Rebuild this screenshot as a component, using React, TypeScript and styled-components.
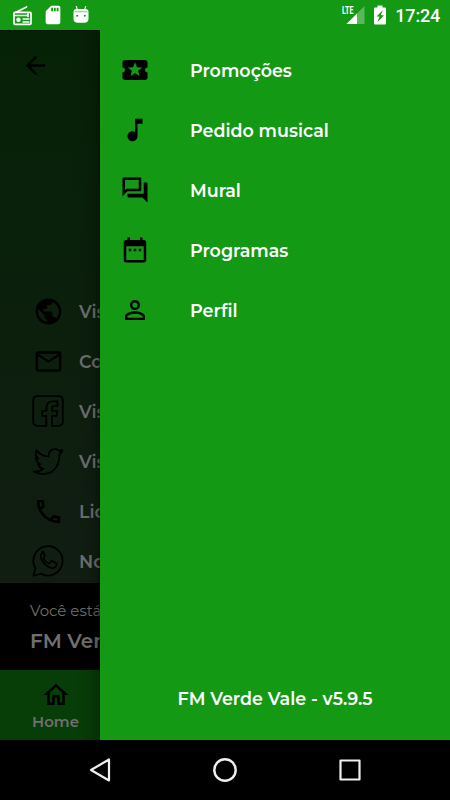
import React from 'react';
import styled, { createGlobalStyle } from 'styled-components';
import {
  MdArrowBack, MdDateRange, MdLocalPlay, MdMailOutline, MdMusicNote, MdOutlineHome,
  MdOutlineLocalPhone, MdOutlineQuestionAnswer, MdPersonOutline, MdPublic, MdSdCard,
} from 'react-icons/md';

const Global = createGlobalStyle`
  * { box-sizing: border-box; }
  body { margin: 0; background: #000; font-family: Montserrat, Inter, sans-serif; }
  svg { display: block; flex: none; }
`;
const Screen = styled.div`
  width: 450px; height: 800px; display: flex; flex-direction: column;
  overflow: hidden; background: #000;
`;
const StatusBar = styled.header`
  height: 30px; flex: none; display: flex; align-items: center; justify-content: space-between;
  padding: 0 10px 0 12px; background: #139913; color: #fff;
`;
const StatusGroup = styled.div<{ $gap: number }>`
  display: flex; align-items: center; gap: ${p => p.$gap}px;
`;
const Clock = styled.span`
  font: 500 18px/30px Roboto, sans-serif; letter-spacing: -0.2px; padding-top: 2px;
`;
const Body = styled.div`height: 710px; flex: none; display: flex;`;
const Page = styled.div`
  position: relative; width: 100px; flex: none; display: flex; flex-direction: column;
  overflow: hidden; white-space: nowrap; color: #707070;
  &::after {
    content: ''; position: absolute; top: 0; right: 0; bottom: 0; width: 26px;
    background: linear-gradient(to right, transparent, rgba(0,0,0,.08) 60%, rgba(0,0,0,.22) 94%, rgba(0,0,0,.65));
  }
`;
const Content = styled.div`
  height: 553px; flex: none; display: flex; flex-direction: column;
  background: linear-gradient(#052206, #111d12); border-top: 1px solid #001000; color: #000;
`;
const BackRow = styled.div`height: 255px; flex: none; padding: 20px 0 0 21px;`;
const LinkRow = styled.div`
  height: 50px; flex: none; display: flex; align-items: center; padding-left: 32px; gap: 15px;
`;
const IconBox = styled.span`
  width: 32px; height: 32px; flex: none; display: flex; align-items: center; justify-content: center;
`;
const Label = styled.span`
  font-size: 17.5px; line-height: 24px; font-weight: 600; white-space: nowrap;
`;
const LinkLabel = styled(Label)`color: #6f706f; padding-top: 2px;`;
const Player = styled.div`
  height: 87px; flex: none; padding: 16px 0 0 30px; background: #000;
`;
const Subtitle = styled.div`font-size: 15px; line-height: 24px; font-weight: 400;`;
const Station = styled.div`font-size: 20px; line-height: 30px; padding-top: 3px; font-weight: 600;`;
const HomeTab = styled.div`
  flex: 1; width: 111px; display: flex; flex-direction: column; align-items: center;
  padding-top: 10px; background: #073d07;
  svg { color: #000; }
`;
const HomeLabel = styled.span`font-size: 15px; line-height: 20px; font-weight: 600; padding-top: 2px;`;
const Drawer = styled.aside`
  width: 350px; flex: none; display: flex; flex-direction: column; justify-content: space-between;
  background: #139913; color: #fff; padding: 10px 0 29px;
`;
const Menu = styled.nav`display: flex; flex-direction: column;`;
const MenuItem = styled.div`
  height: 60px; display: flex; align-items: center; gap: 40px; padding-left: 20px;
  svg { color: #000; }
`;
const MenuLabel = styled(Label)`padding-top: 2px;`;
const Version = styled(Label)`text-align: center;`;
const NavBar = styled.footer`
  height: 60px; flex: none; display: flex; align-items: center; justify-content: space-between;
  padding: 0 85px; background: #000;
`;

const line = { fill: 'none', stroke: 'currentColor', strokeLinejoin: 'round', strokeLinecap: 'round' } as const;

const Radio = () => (
  <svg width="21" height="21" viewBox="0 0 21 21" {...line} strokeWidth="1.700">
    <path d="M4 7.200 14.500 2" /><rect x="2" y="7.300" width="17" height="12" rx="1" />
    <path d="M3 10.500h12M11 14h6M11 17h6" strokeWidth="1.300" />
    <circle cx="6.500" cy="14.700" r="2.200" fill="currentColor" stroke="none" />
    <path d="M16 8.500v3" />
  </svg>
);
const Robot = () => (
  <svg width="16" height="18" viewBox="0 0 16 18">
    <path d="M3.200 0 4.500 4M12.800 0 11.500 4" stroke="#fff" strokeWidth="1.100" />
    <path d="M.5 6Q.5 3 3.500 3h9q3 0 3 3v6.500q0 4.300-4.500 4.300H5Q.5 16.800.5 12.500Z" fill="#fff" />
    <path d="M1.500 5.700h13" stroke="#9bd49b" strokeWidth="1.300" />
    <circle cx="4.200" cy="9.700" r="1" fill="#139913" /><circle cx="11.800" cy="9.700" r="1" fill="#139913" />
  </svg>
);
const Signal = () => (
  <svg width="23" height="20" viewBox="0 0 23 20">
    <path d="M22.500 1v18H4.500Z" fill="#fff" opacity=".3" />
    <path d="M15 8.500V19H4.500Z" fill="#fff" />
    <text x="0" y="9.200" fill="#fff" fontFamily="Roboto" fontWeight="700" fontSize="10.500" textLength="11.500" lengthAdjust="spacingAndGlyphs">LTE</text>
  </svg>
);
const Battery = () => (
  <svg width="12" height="20" viewBox="0 0 12 20">
    <path d="M3.500 0.500h5v2h2.300q1.200 0 1.200 1.200v14.600q0 1.200-1.200 1.200H1.200Q0 19.500 0 18.300V3.700Q0 2.500 1.200 2.500h2.300Z" fill="#fff" />
    <path d="M9 5 2.500 11.500h3L3.500 17.300l6.500-7H6.700Z" fill="#139913" />
  </svg>
);
const Facebook = () => (
  <svg width="32" height="32" viewBox="0 0 32 32" {...line} strokeWidth="1.700">
    <path d="M14.300 30.800H5.500Q1.200 30.800 1.200 26.500v-21Q1.200 1.200 5.500 1.200h21Q30.800 1.200 30.800 5.500v21Q30.800 30.800 26.500 30.800H20v-10h4.500l.8-4.800H20v-3q0-2 2-2h3.500V6.300H21q-6.500 0-6.500 6.200V16H10.200v4.800h4.100Z" />
  </svg>
);
const Twitter = () => (
  <svg width="32" height="32" viewBox="0 0 32 32" {...line} strokeWidth="1.700">
    <path d="M30.500 6.200q-1.500.8-2.400.8 1.200-.9 1.700-2.200l-2.700 1q-2.200-2.100-5.200-1.600-5.600 1-5.200 7.300-7.800-.4-12.200-6.300-2.300 4.900 1.700 8.400-1.300 0-2.500-.8.300 4.500 4.700 6.400l-2.300.2q1.300 3.700 5.200 4.400-3.500 3.100-9.700 2.700 4.500 2.600 9.700 2.600 9.500-.4 13.600-8.200Q27.600 16 27.400 9.500q2-1.500 3.100-3.300Z" />
  </svg>
);
const WhatsApp = () => (
  <svg width="32" height="32" viewBox="0 0 32 32" {...line} strokeWidth="1.700">
    <path d="M1.500 30.700 3.400 23.300A14.600 14.600 0 1 1 9 28.700Z" />
    <path d="M11.200 7.200 9.800 8.100q-1.700 2.100-.9 5 2.800 7.200 9.800 9.600 4 1.300 5.800-2l.3-2.300-4.400-2.500q-.8-.3-1.300.5l-1.500 1.800q-.5.500-1.200.1-3.500-1.600-5-5l.2-.9 1.300-1.700-.1-.8-1.600-3q0-.3-.8-.3Z" />
  </svg>
);

const links = [
  { id: 'site', icon: <MdPublic size={31} />, text: 'Vis' },
  { id: 'mail', icon: <MdMailOutline size={31} />, text: 'Co' },
  { id: 'facebook', icon: <Facebook />, text: 'Vis' },
  { id: 'twitter', icon: <Twitter />, text: 'Vis' },
  { id: 'phone', icon: <MdOutlineLocalPhone size={31} />, text: 'Lic' },
  { id: 'whatsapp', icon: <WhatsApp />, text: 'No' },
];
const menu = [
  { icon: <MdLocalPlay size={30} />, text: 'Promoções' },
  { icon: <MdMusicNote size={30} />, text: 'Pedido musical' },
  { icon: <MdOutlineQuestionAnswer size={30} />, text: 'Mural' },
  { icon: <MdDateRange size={30} />, text: 'Programas' },
  { icon: <MdPersonOutline size={30} />, text: 'Perfil' },
];

export default function App() {
  return (
    <Screen>
      <Global />
      <StatusBar>
        <StatusGroup $gap={9}>
          <Radio /><MdSdCard size={22} /><Robot />
        </StatusGroup>
        <StatusGroup $gap={9}>
          <Signal /><Battery /><Clock>17:24</Clock>
        </StatusGroup>
      </StatusBar>
      <Body>
        <Page>
          <Content>
            <BackRow><MdArrowBack size={29} /></BackRow>
            {links.map(l => (
              <LinkRow key={l.id}><IconBox>{l.icon}</IconBox><LinkLabel>{l.text}</LinkLabel></LinkRow>
            ))}
          </Content>
          <Player>
            <Subtitle>Você está</Subtitle>
            <Station>FM Ver</Station>
          </Player>
          <HomeTab><MdOutlineHome size={30} /><HomeLabel>Home</HomeLabel></HomeTab>
        </Page>
        <Drawer>
          <Menu>
            {menu.map(m => (
              <MenuItem key={m.text}>{m.icon}<MenuLabel>{m.text}</MenuLabel></MenuItem>
            ))}
          </Menu>
          <Version>FM Verde Vale - v5.9.5</Version>
        </Drawer>
      </Body>
      <NavBar>
        <svg width="30" height="30" viewBox="0 0 30 30" {...line} stroke="#eee" strokeWidth="2.200"><path d="M24 4.500v21L6 15Z" /></svg>
        <svg width="30" height="30" viewBox="0 0 30 30" {...line} stroke="#eee" strokeWidth="2.400"><circle cx="15" cy="15" r="10.700" /></svg>
        <svg width="30" height="30" viewBox="0 0 30 30" {...line} stroke="#eee" strokeWidth="2.200"><path d="M5.500 5.500h19v19h-19Z" /></svg>
      </NavBar>
    </Screen>
  );
}
